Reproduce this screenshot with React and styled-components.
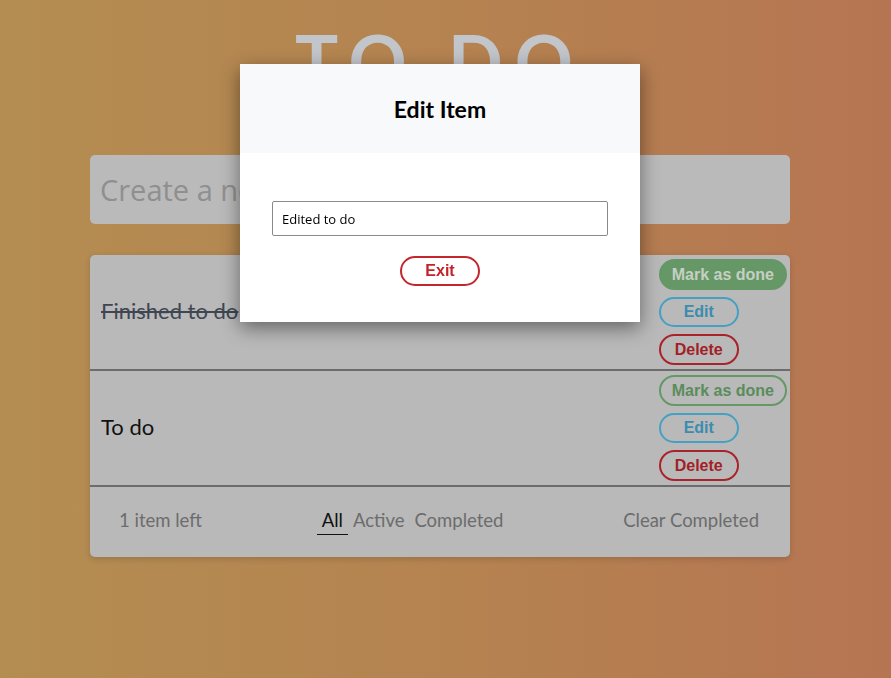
import React from "react";
import styled, { createGlobalStyle, css } from "styled-components";

const Global = createGlobalStyle`
  html, body { margin: 0; padding: 0; }
  body {
    min-height: 678px;
    background: linear-gradient(to right, #b48d52 0%, #b58350 50%, #b67552 100%);
    font-family: Lato, "Open Sans", sans-serif;
    overflow: hidden;
  }
`;

const Page = styled.div`
  width: 700px;
  margin-left: 90px;
  display: flex;
  flex-direction: column;
`;

const Title = styled.h1`
  margin: 17px 0 0;
  text-align: center;
  font-family: Lato, sans-serif;
  font-weight: 700;
  font-size: 72px;
  line-height: 1.2;
  letter-spacing: 12px;
  color: #c2c5ca;
`;

const CreateInput = styled.input`
  margin-top: 52px;
  height: 69px;
  box-sizing: border-box;
  border: none;
  border-radius: 5px;
  background: #bababa;
  padding: 0 10px;
  font-family: "Open Sans", sans-serif;
  font-size: 29px;
  outline: none;
  &::placeholder { color: #8f8f8f; }
`;

const Card = styled.div`
  margin-top: 31px;
  background: #b9b9b9;
  border-radius: 5px;
  box-shadow: 0 2px 6px rgba(0, 0, 0, 0.15);
  display: flex;
  flex-direction: column;
`;

const Row = styled.div`
  height: 114px;
  border-bottom: 2px solid #6c6c6c;
  display: flex;
  align-items: center;
  justify-content: space-between;
  padding: 0 3px 0 11px;
`;

const ItemText = styled.span`
  font-family: Lato, sans-serif;
  font-size: 22px;
  margin-top: -3px;
  color: ${(p) => (p.$done ? "#3f4652" : "#111")};
  text-decoration: ${(p) => (p.$done ? "line-through" : "none")};
`;

const Actions = styled.div`
  display: flex;
  flex-direction: column;
  align-items: flex-start;
  gap: 7px;
`;

const tones = {
  green: { c: "#5a8c5c", b: "#659866", fill: "#659866", ft: "#c6cfc3" },
  blue: { c: "#3a8cb0", b: "#45a0c4" },
  red: { c: "#a21f27", b: "#a8232b" },
  exit: { c: "#c4232b", b: "#c4262e" },
};

const Pill = styled.button`
  height: 31px;
  min-width: 80px;
  box-sizing: border-box;
  padding: 0 11px;
  border-radius: 16px;
  border: 2px solid ${(p) => tones[p.$tone].b};
  background: ${(p) => (p.$filled ? tones[p.$tone].fill : "transparent")};
  color: ${(p) => (p.$filled ? tones[p.$tone].ft : tones[p.$tone].c)};
  font-family: "Liberation Sans", Arial, sans-serif;
  font-weight: 700;
  font-size: 16px;
  cursor: pointer;
  ${(p) => p.$short && css`height: 30px;`}
`;

const Footer = styled.div`
  height: 70px;
  box-sizing: border-box;
  padding: 0 31px 4px 29px;
  display: flex;
  align-items: center;
  justify-content: space-between;
  font-family: Lato, sans-serif;
  font-size: 18.5px;
  color: #6c6c6c;
`;

const Filters = styled.div`
  display: flex;
  align-items: center;
  padding-top: 4px;
`;

const Filter = styled.span`
  padding: 0 5px 3px;
  border-bottom: 1px solid ${(p) => (p.$active ? "#111" : "transparent")};
  color: ${(p) => (p.$active ? "#111" : "#6c6c6c")};
`;

const Overlay = styled.div`
  position: fixed;
  inset: 0;
`;

const Modal = styled.div`
  position: absolute;
  top: 64px;
  left: 240px;
  width: 400px;
  background: #fff;
  box-shadow: 0 6px 18px rgba(0, 0, 0, 0.45);
  display: flex;
  flex-direction: column;
`;

const ModalHeader = styled.div`
  height: 89px;
  background: #f8f9fa;
  display: flex;
  align-items: center;
  justify-content: center;
`;

const ModalTitle = styled.h2`
  margin: 0;
  font-family: Lato, sans-serif;
  font-weight: 700;
  font-size: 23px;
  color: #000;
`;

const ModalBody = styled.div`
  padding: 48px 32px 36px;
  display: flex;
  flex-direction: column;
  align-items: center;
  gap: 20px;
`;

const EditInput = styled.input`
  width: 100%;
  height: 35px;
  box-sizing: border-box;
  border: 1px solid #8a8a8a;
  border-radius: 2px;
  padding: 0 9px;
  font-family: "Open Sans", sans-serif;
  font-size: 13px;
  color: #000;
  outline: none;
`;

export default function App() {
  return (
    <>
      <Global />
      <Page>
        <Title>TO DO</Title>
        <CreateInput placeholder="Create a new todo..." />
        <Card>
          <Row>
            <ItemText $done>Finished to do</ItemText>
            <Actions>
              <Pill $tone="green" $filled>Mark as done</Pill>
              <Pill $tone="blue" $short>Edit</Pill>
              <Pill $tone="red">Delete</Pill>
            </Actions>
          </Row>
          <Row>
            <ItemText>To do</ItemText>
            <Actions>
              <Pill $tone="green">Mark as done</Pill>
              <Pill $tone="blue" $short>Edit</Pill>
              <Pill $tone="red">Delete</Pill>
            </Actions>
          </Row>
          <Footer>
            <span>1 item left</span>
            <Filters>
              <Filter $active>All</Filter>
              <Filter>Active</Filter>
              <Filter>Completed</Filter>
            </Filters>
            <span>Clear Completed</span>
          </Footer>
        </Card>
      </Page>
      <Overlay>
        <Modal>
          <ModalHeader>
            <ModalTitle>Edit Item</ModalTitle>
          </ModalHeader>
          <ModalBody>
            <EditInput defaultValue="Edited to do" />
            <Pill $tone="exit" $short>Exit</Pill>
          </ModalBody>
        </Modal>
      </Overlay>
    </>
  );
}
